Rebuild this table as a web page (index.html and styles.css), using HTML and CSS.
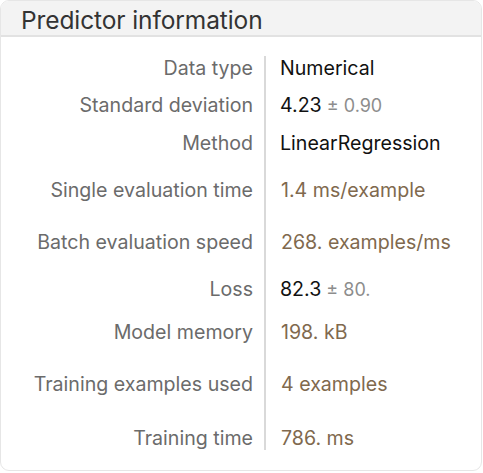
FILE: index.html
```html
<!DOCTYPE html>
<html>
<head>
<meta charset="utf-8">
<link rel="stylesheet" href="styles.css">
</head>
<body>
<div class="card">
  <div class="header">Predictor information</div>
  <div class="table">
    <div class="row g1"><div class="label">Data type</div><div class="value">Numerical</div></div>
    <div class="row g2"><div class="label">Standard deviation</div><div class="value">4.23<span class="pm"> ± 0.90</span></div></div>
    <div class="row g2"><div class="label">Method</div><div class="value">LinearRegression</div></div>
    <div class="row g3"><div class="label">Single evaluation time</div><div class="value q">1.4 ms/example</div></div>
    <div class="row g4"><div class="label">Batch evaluation speed</div><div class="value q">268. examples/ms</div></div>
    <div class="row g3"><div class="label">Loss</div><div class="value">82.3<span class="pm"> ± 80.</span></div></div>
    <div class="row g5"><div class="label">Model memory</div><div class="value q">198. kB</div></div>
    <div class="row g4"><div class="label">Training examples used</div><div class="value q">4 examples</div></div>
    <div class="row g6"><div class="label">Training time</div><div class="value q">786. ms</div></div>
  </div>
</div>
</body>
</html>
```

FILE: styles.css
```css
html, body {
  margin: 0;
  padding: 0;
  background: #ffffff;
}
.card {
  width: 482px;
  height: 471px;
  box-sizing: border-box;
  border: 1px solid #e6e6e6;
  border-radius: 9px;
  overflow: hidden;
  font-family: Inter, "Noto Sans", sans-serif;
}
.header {
  height: 34px;
  background: #f3f3f3;
  border-bottom: 2px solid #e2e2e2;
  padding-left: 20px;
  font-size: 24.5px;
  line-height: 39px;
  color: #333333;
  letter-spacing: -0.1px;
}
.table {
  padding-top: 6px;
}
.row {
  display: flex;
  font-size: 19.6px;
  line-height: 24px;
}
.label {
  width: 252px;
  padding-right: 11px;
  text-align: right;
  color: #6b6b6b;
}
.value {
  flex: 1;
  border-left: 2px solid #d9d9d9;
  padding-left: 14px;
  color: #111111;
}
.value.q {
  color: #80694e;
  padding-left: 15px;
}
.pm {
  color: #8d8d8d;
  font-size: 18px;
}
.g1 > * { padding-top: 13px; }
.g2 > * { padding-top: 13px; }
.g3 > * { padding-top: 23px; }
.g4 > * { padding-top: 28px; }
.g5 > * { padding-top: 18px; }
.g6 > * { padding-top: 30px; }
.g1 > .value { padding-top: 0; margin-top: 13px; }
```
